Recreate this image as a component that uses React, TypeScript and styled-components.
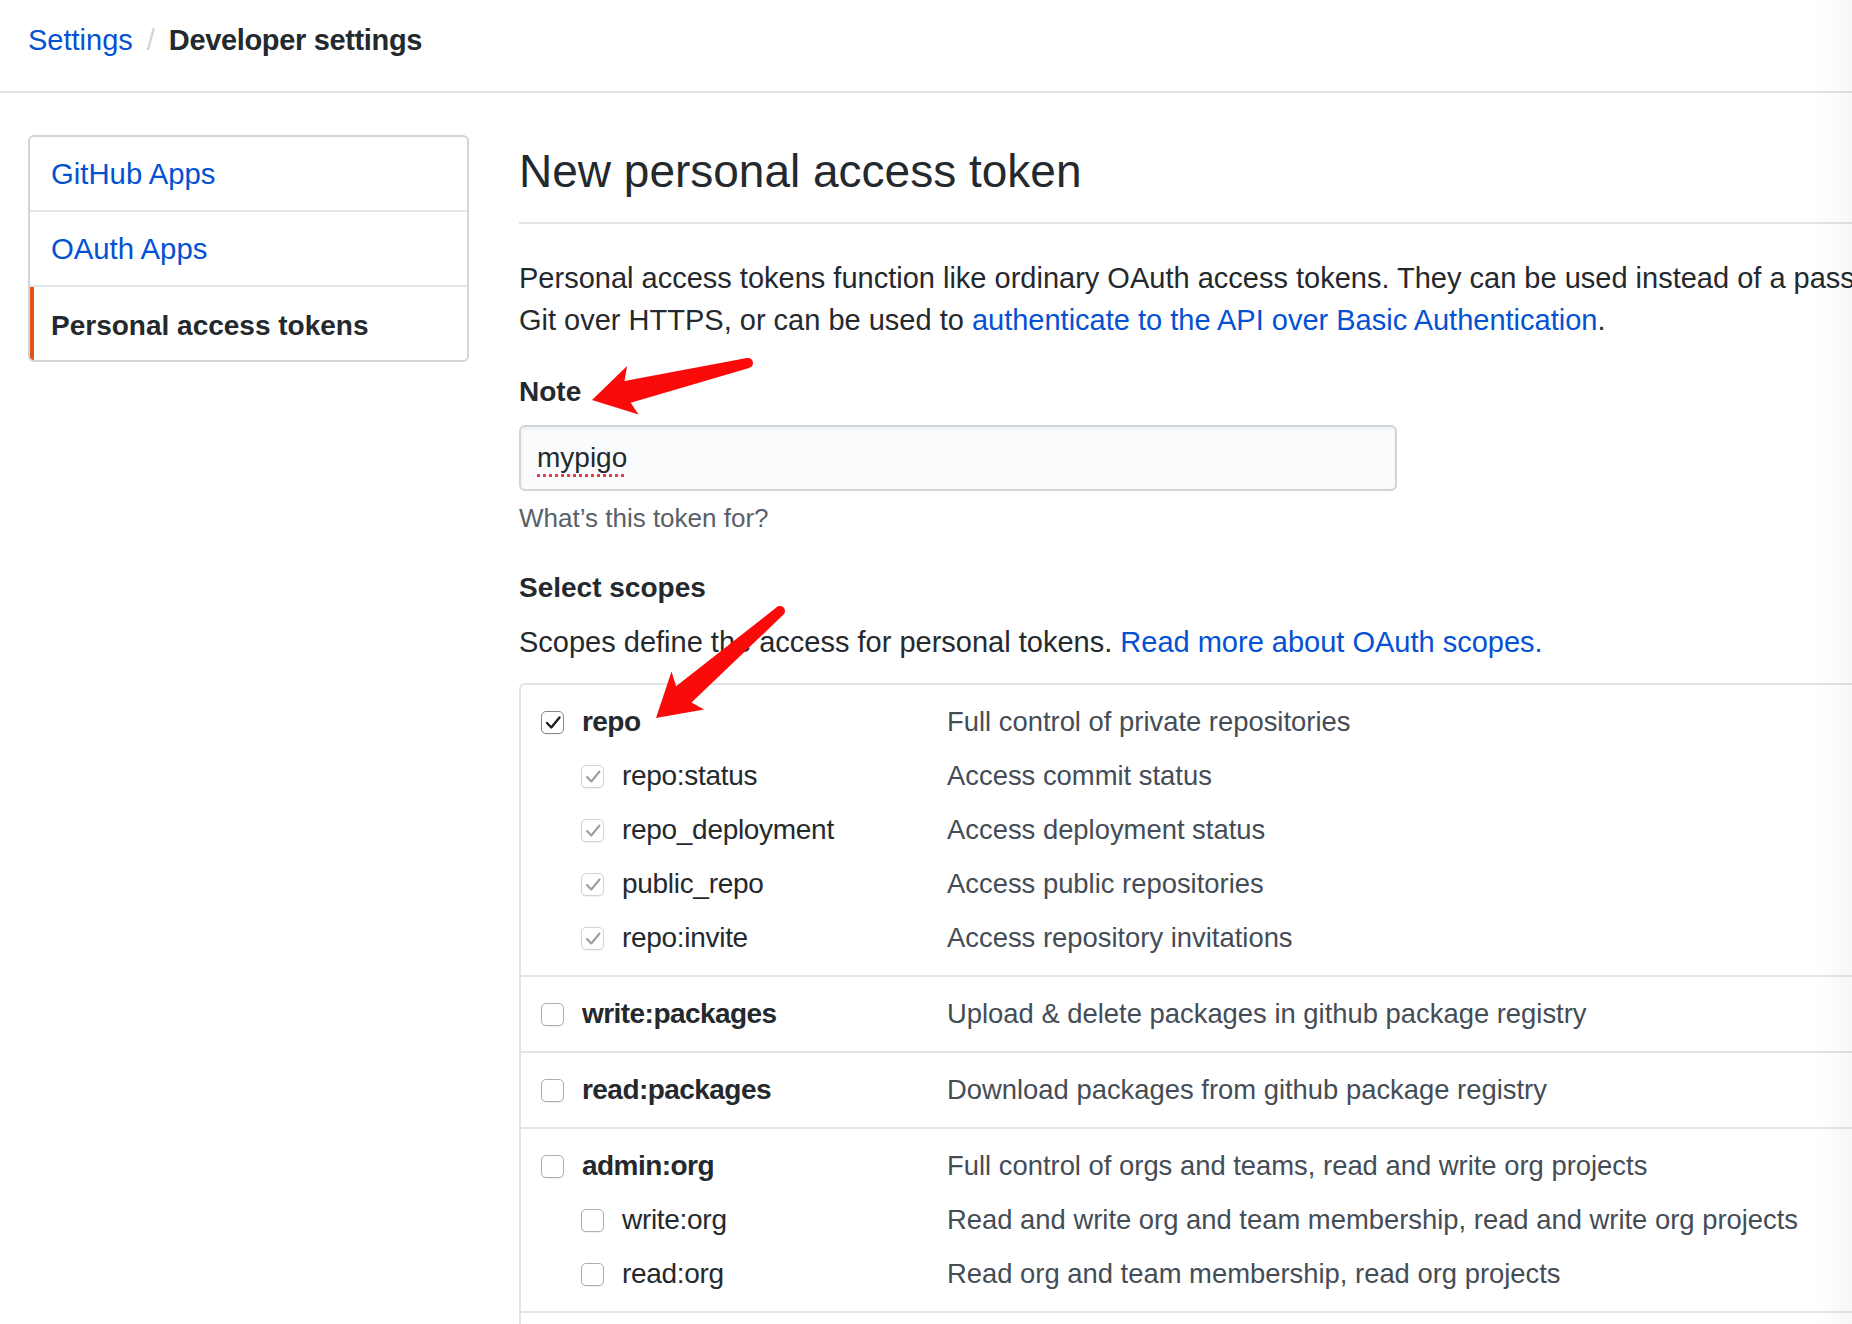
import React from "react";
import styled, { createGlobalStyle } from "styled-components";

type Scope = {
  name: string;
  desc: string;
  nested?: boolean;
  checked?: boolean;
  disabled?: boolean;
};

const scopeGroups: Scope[][] = [
  [
    { name: "repo", desc: "Full control of private repositories", checked: true },
    { name: "repo:status", desc: "Access commit status", nested: true, checked: true, disabled: true },
    { name: "repo_deployment", desc: "Access deployment status", nested: true, checked: true, disabled: true },
    { name: "public_repo", desc: "Access public repositories", nested: true, checked: true, disabled: true },
    { name: "repo:invite", desc: "Access repository invitations", nested: true, checked: true, disabled: true },
  ],
  [{ name: "write:packages", desc: "Upload & delete packages in github package registry" }],
  [{ name: "read:packages", desc: "Download packages from github package registry" }],
  [
    { name: "admin:org", desc: "Full control of orgs and teams, read and write org projects" },
    { name: "write:org", desc: "Read and write org and team membership, read and write org projects", nested: true },
    { name: "read:org", desc: "Read org and team membership, read org projects", nested: true },
  ],
  [
    { name: "admin:public_key", desc: "Full control of user public keys" },
    { name: "write:public_key", desc: "Write user public keys", nested: true },
    { name: "read:public_key", desc: "Read user public keys", nested: true },
  ],
];

const menu = [
  { label: "GitHub Apps", active: false },
  { label: "OAuth Apps", active: false },
  { label: "Personal access tokens", active: true },
];

// skitch style arrow: tip at (0,0), body runs back towards the tail
const arrowPoints = (tail: [number, number], tip: [number, number]) => {
  const dx = tip[0] - tail[0];
  const dy = tip[1] - tail[1];
  const len = Math.hypot(dx, dy);
  const bx = -dx / len;
  const by = -dy / len;
  const nx = -by;
  const ny = bx;
  const at = (s: number, t: number) =>
    `${(tip[0] + bx * s + nx * t).toFixed(1)},${(tip[1] + by * s + ny * t).toFixed(1)}`;
  return [
    at(0, 0),
    at(42, -25),
    at(36, -11),
    at(len, -5),
    at(len, 5),
    at(37, 11.5),
    at(42, 25),
  ].join(" ");
};

const arrows: { tail: [number, number]; tip: [number, number] }[] = [
  { tail: [748, 363], tip: [592, 400] },
  { tail: [780, 611], tip: [656, 718] },
];

const GlobalStyle = createGlobalStyle`
  html, body {
    margin: 0;
    overflow: hidden;
    background: #ffffff;
  }
  body {
    font-family: "Liberation Sans", Arial, sans-serif;
    color: #24292e;
    -webkit-font-smoothing: antialiased;
  }
`;

const Page = styled.div`
  position: relative;
  width: 2100px;
  min-height: 1324px;
`;

const Header = styled.header`
  height: 71px;
  padding: 20px 0 0 28px;
  border-bottom: 2px solid #e1e4e8;
`;

const Breadcrumb = styled.div`
  display: flex;
  align-items: center;
  font-size: 29px;
  line-height: 40px;
`;

const CrumbLink = styled.a`
  color: #0451d2;
  text-decoration: none;
`;

const CrumbSep = styled.span`
  color: #d1d5da;
  margin: 0 14px;
`;

const CrumbCurrent = styled.strong`
  font-weight: 700;
  color: #24292e;
  letter-spacing: -0.35px;
`;

const Layout = styled.div`
  display: flex;
  align-items: flex-start;
  gap: 50px;
  padding: 42px 0 0 28px;
`;

const SideMenu = styled.nav`
  flex: 0 0 441px;
  box-sizing: border-box;
  border: 2px solid #d1d5da;
  border-radius: 6px;
  overflow: hidden;
`;

const MenuItem = styled.a<{ $active?: boolean }>`
  display: flex;
  align-items: center;
  height: 73px;
  padding-left: 21px;
  padding-top: ${(p) => (p.$active ? 4 : 0)}px;
  box-sizing: border-box;
  font-size: ${(p) => (p.$active ? 28 : 29.3)}px;
  text-decoration: none;
  color: ${(p) => (p.$active ? "#24292e" : "#0451d2")};
  font-weight: ${(p) => (p.$active ? 700 : 400)};
  box-shadow: ${(p) => (p.$active ? "inset 4px 0 0 #e3540b" : "none")};
  & + & {
    height: 75px;
    border-top: 2px solid #e1e4e8;
  }
`;

const Main = styled.main`
  flex: 0 0 1500px;
`;

const Title = styled.h1`
  margin: 8px 0 0;
  padding-bottom: 22px;
  border-bottom: 2px solid #e1e4e8;
  font-size: 46px;
  line-height: 57px;
  font-weight: 400;
  color: #24292e;
`;

const Intro = styled.p`
  margin: 33px 0 0;
  font-size: 29px;
  line-height: 42px;
  white-space: nowrap;
`;

const Link = styled.a`
  color: #0451d2;
  text-decoration: none;
`;

const FieldLabel = styled.div<{ $gap: number }>`
  margin-top: ${(p) => p.$gap}px;
  font-size: 28px;
  line-height: 42px;
  font-weight: 700;
`;

const InputBox = styled.div`
  margin-top: 12px;
  width: 878px;
  height: 66px;
  box-sizing: border-box;
  display: flex;
  align-items: center;
  padding: 0 16px;
  background: #fafbfc;
  border: 2px solid #d1d5da;
  border-radius: 6px;
  box-shadow: inset 0 2px 3px rgba(27, 31, 35, 0.06);
  font-size: 28px;
  color: #24292e;
`;

const Misspelled = styled.span`
  text-decoration: underline dotted #f2383b;
  text-decoration-thickness: 3px;
  text-underline-offset: 7px;
`;

const Hint = styled.div`
  margin-top: 9px;
  font-size: 26px;
  line-height: 36px;
  color: #586069;
`;

const ScopesIntro = styled.p`
  margin: 12px 0 0;
  font-size: 29px;
  line-height: 42px;
`;

const ScopeTable = styled.div`
  margin-top: 20px;
  border-top: 2px solid #e1e4e8;
  border-left: 2px solid #e1e4e8;
  border-top-left-radius: 6px;
`;

const ScopeGroup = styled.div`
  padding: 10px 0;
  & + & {
    border-top: 2px solid #e1e4e8;
  }
`;

const ScopeRow = styled.div`
  display: grid;
  grid-template-columns: 406px 1fr;
  align-items: center;
  height: 54px;
  padding-left: 20px;
  font-size: 28px;
`;

const ScopeName = styled.label<{ $nested?: boolean }>`
  display: flex;
  align-items: center;
  gap: 18px;
  padding-left: ${(p) => (p.$nested ? 40 : 0)}px;
  font-weight: ${(p) => (p.$nested ? 400 : 700)};
  letter-spacing: ${(p) => (p.$nested ? "-0.3px" : "-0.55px")};
  color: #24292e;
  white-space: nowrap;
`;

const ScopeDesc = styled.span`
  font-size: 27.4px;
  color: #444d56;
  white-space: nowrap;
`;

const Box = styled.span<{ $checked?: boolean; $disabled?: boolean }>`
  flex: 0 0 23px;
  width: 23px;
  height: 23px;
  box-sizing: border-box;
  border-radius: 5px;
  background: #ffffff;
  border: 1.5px solid
    ${(p) => (p.$disabled ? "#d3d3d3" : p.$checked ? "#888888" : "#adadad")};
  box-shadow: 0 1px 1px rgba(0, 0, 0, 0.06);
  display: flex;
  align-items: center;
  justify-content: center;
`;

const Overlay = styled.svg`
  position: absolute;
  top: 0;
  left: 0;
  pointer-events: none;
`;

const EdgeShade = styled.div`
  position: absolute;
  top: 0;
  left: 1816px;
  width: 36px;
  height: 1324px;
  background: linear-gradient(to right, rgba(0, 0, 0, 0), rgba(0, 0, 0, 0.03));
  pointer-events: none;
`;

const Checkbox = ({ checked, disabled }: { checked?: boolean; disabled?: boolean }) => (
  <Box $checked={checked} $disabled={disabled}>
    {checked && (
      <svg width="20" height="20" viewBox="0 0 20 20">
        <path
          d="M4 11 L8.3 15.5 L16.5 5.5"
          fill="none"
          stroke={disabled ? "#9d9d9d" : "#1b1f23"}
          strokeWidth={disabled ? 2 : 2.4}
          strokeLinecap="round"
          strokeLinejoin="round"
        />
      </svg>
    )}
  </Box>
);

const App = () => {
  return (
    <Page>
      <GlobalStyle />
      <Header>
        <Breadcrumb>
          <CrumbLink href="#">Settings</CrumbLink>
          <CrumbSep>/</CrumbSep>
          <CrumbCurrent>Developer settings</CrumbCurrent>
        </Breadcrumb>
      </Header>

      <Layout>
        <SideMenu>
          {menu.map((m) => (
            <MenuItem key={m.label} href="#" $active={m.active}>
              {m.label}
            </MenuItem>
          ))}
        </SideMenu>

        <Main>
          <Title>New personal access token</Title>
          <Intro>
            Personal access tokens function like ordinary OAuth access tokens. They can be used
            instead of a password for
            <br />
            Git over HTTPS, or can be used to{" "}
            <Link href="#">authenticate to the API over Basic Authentication</Link>.
          </Intro>

          <FieldLabel $gap={30}>Note</FieldLabel>
          <InputBox>
            <Misspelled>mypigo</Misspelled>
          </InputBox>
          <Hint>What’s this token for?</Hint>

          <FieldLabel $gap={31}>Select scopes</FieldLabel>
          <ScopesIntro>
            Scopes define the access for personal tokens.{" "}
            <Link href="#">Read more about OAuth scopes.</Link>
          </ScopesIntro>

          <ScopeTable>
            {scopeGroups.map((group, gIdx) => (
              <ScopeGroup key={`group-${gIdx}`}>
                {group.map((s) => (
                  <ScopeRow key={s.name}>
                    <ScopeName $nested={s.nested}>
                      <Checkbox checked={s.checked} disabled={s.disabled} />
                      {s.name}
                    </ScopeName>
                    <ScopeDesc>{s.desc}</ScopeDesc>
                  </ScopeRow>
                ))}
              </ScopeGroup>
            ))}
          </ScopeTable>
        </Main>
      </Layout>

      <EdgeShade />
      <Overlay width={1852} height={1324} viewBox="0 0 1852 1324">
        {arrows.map((a, i) => (
          <g key={`arrow-${i}`} fill="#fb0a0a">
            <polygon points={arrowPoints(a.tail, a.tip)} />
            <circle cx={a.tail[0]} cy={a.tail[1]} r={5} />
          </g>
        ))}
      </Overlay>
    </Page>
  );
};

export default App;
